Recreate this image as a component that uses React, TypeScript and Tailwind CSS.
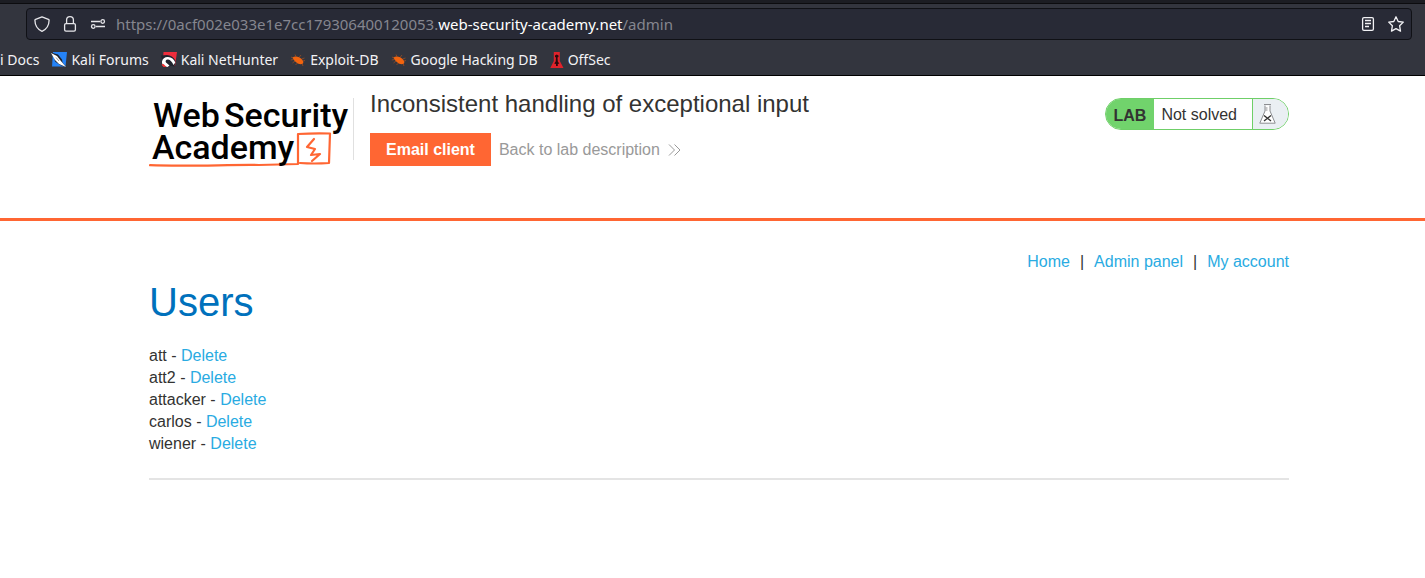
import React from "react";

const users = ["att", "att2", "attacker", "carlos", "wiener"];

function ShieldIcon() {
  return (
    <svg width="16" height="16" viewBox="0 0 16 16" fill="none" stroke="#e6e6ea" strokeWidth="1.3" strokeLinejoin="round">
      <path d="M8 .8 14.4 3.4c.5.2.7.5.7.9-.1 5-2.4 9-7.1 11C3.3 13.3 1 9.3.9 4.3c0-.4.2-.7.7-.9z" />
    </svg>
  );
}

function LockIcon() {
  return (
    <svg width="14" height="16" viewBox="0 0 14 16" fill="none" stroke="#e6e6ea" strokeWidth="1.3">
      <rect x="1.6" y="7.6" width="10.8" height="7.6" rx="1.4" />
      <path d="M3.6 7.6V4.1a3.4 3.4 0 0 1 6.8 0v3.5" />
    </svg>
  );
}

function PermissionsIcon() {
  return (
    <svg width="16" height="16" viewBox="0 0 16 16" fill="none" stroke="#e6e6ea" strokeWidth="1.3">
      <path d="M1 5.5h9M6 10.5h9" />
      <circle cx="12.7" cy="5.5" r="1.8" />
      <circle cx="3.3" cy="10.5" r="1.8" />
    </svg>
  );
}

function ReaderIcon() {
  return (
    <svg width="16" height="16" viewBox="0 0 16 16" fill="none" stroke="#f2f2f5" strokeWidth="1.3">
      <rect x="2.6" y="1.6" width="10.8" height="12.8" rx="1.4" />
      <path d="M5 4.5h6M5 7.5h6M5 10.5h4" />
    </svg>
  );
}

function StarIcon() {
  return (
    <svg width="16" height="16" viewBox="0 0 16 16" fill="none" stroke="#f2f2f5" strokeWidth="1.3" strokeLinejoin="round">
      <path d="M8 .8 10.2 5.5l5.1.6-3.7 3.6.9 5.4L8 12.6l-4.5 2.5.9-5.4L.7 6.1l5.1-.6z" />
    </svg>
  );
}

function ForumsIcon() {
  return (
    <svg width="16" height="16" viewBox="0 0 16 16">
      <path d="M2 0H16L14.5 14.5H1z" fill="#2583f7" />
      <path d="M0 .5 7 2.5l4 5 .5 3L15.5 15.5 9 13 4 9.5 3 5.5z" fill="#20242e" />
      <path d="M0 1 6 4l3.5 4.5L15 15 8 12 4 8z" fill="#fff" />
      <path d="m5 5.5 3 3.5" stroke="#20242e" strokeWidth=".5" />
    </svg>
  );
}

function NetHunterIcon() {
  return (
    <svg width="16" height="16" viewBox="0 0 16 16">
      <path d="M2.5 0H16L14 14H1.5z" fill="#ee2d3c" />
      <path d="M0 3.5 6 3c3.5.1 6.5 2 8.5 5.8l-1 5.7-3.5-.5-5.5 1L.5 12.5 1 8z" fill="#20242e" />
      <path d="M1 9.5C1.6 6.5 4 4.8 7 5c3.5.2 6 2.3 7.3 5.5L12.5 13C11 10 9.3 8 7.2 7.6 5 7.3 4 9 5 10.5l3.5 3-2 1.5C3 14.5.6 12.5 1 9.5z" fill="#fff" />
      <path d="m.5 12.5 2 2.500h3l-3-3z" fill="#e33" />
    </svg>
  );
}

function BugIcon() {
  return (
    <svg width="16" height="16" viewBox="0 0 16 16" fill="none">
      <path d="M3 6 1 5M3.5 7.5.8 8M6 4.5 5 2.5M9 5.5 11 3M11.5 7l3-1M8 10.5 5.5 13M5 9 2.5 11M13 9l2-.5M12 11.5l1 2.5" stroke="#a6501f" strokeWidth=".7" />
      <path d="M2.500 5.500C5 3.500 9.500 4.500 12 7.500c1.500 1.700 1.800 3.300.6 4.300-2 .8-4.500.2-6.500-1.500C4.500 9 3.500 7.500 2.500 5.500z" fill="#f2640f" />
    </svg>
  );
}

function OffSecIcon() {
  return (
    <svg width="14" height="16" viewBox="0 0 14 16">
      <path d="M3.8 0h6v9l3.7 7H.3L3.8 9z" fill="#e0222b" />
      <path d="M5 3.5 6.8 2.5l1.7 1V5l-1 .5.3 4 1.5 2-1.5.5V14H6v-2l-1.800-.5 1.500-2 .3-4-1-.5z" fill="#2a090d" />
    </svg>
  );
}

function AcademyLogo() {
  return (
    <svg width="203" height="78" viewBox="0 0 203 78" role="img" aria-label="Web Security Academy">
      <g fill="none" stroke="#ff6633" strokeWidth="2.2" strokeLinejoin="round" strokeLinecap="round">
        <path d="M1 67.2 C40 68.7 80 66.5 110 67 L149 66 L149 36 Q165 35 181 35.5 L180 65 Q165 66 151 65" />
        <path d="m165 41-7 8 8 2-4 6 9-1-8 7" />
      </g>
      <g className="font-['Roboto',sans-serif] font-medium" fontSize="34">
        <text x="4" y="29">Web</text>
        <text x="75" y="29">Security</text>
        <text x="3" y="61">Academy</text>
      </g>
    </svg>
  );
}

const bookmarks = [
  { name: "Kali Forums", icon: <ForumsIcon /> },
  { name: "Kali NetHunter", icon: <NetHunterIcon /> },
  { name: "Exploit-DB", icon: <BugIcon /> },
  { name: "Google Hacking DB", icon: <BugIcon /> },
  { name: "OffSec", icon: <OffSecIcon /> },
];

function BrowserChrome() {
  return (
    <div className="border-b border-black bg-[#33353e] font-['Noto_Sans',sans-serif] text-[#f2f2f5]">
      <div className="h-1 border-b border-[#0c0c0f] bg-[#1c1d23]" />
      <div className="pt-1 pr-[13px] pl-[26px]">
        <div className="flex h-8 items-center rounded border border-[#101116] bg-[#282a36] px-[7px]">
          <div className="flex items-center gap-3">
            <button aria-label="Tracking protection"><ShieldIcon /></button>
            <button aria-label="Connection secure" className="flex w-4 justify-center"><LockIcon /></button>
            <button aria-label="Permissions"><PermissionsIcon /></button>
          </div>
          <div className="ml-[10px] flex-1 text-[15px] whitespace-nowrap text-[#85868f]">
            https://0acf002e033e1e7cc179306400120053.<span className="text-white">web-security-academy.net</span>/admin
          </div>
          <div className="flex items-center gap-3">
            <button aria-label="Reader view"><ReaderIcon /></button>
            <button aria-label="Bookmark page"><StarIcon /></button>
          </div>
        </div>
      </div>
      <nav aria-label="Bookmarks" className="flex h-[35px] items-center gap-3 overflow-hidden pt-1 text-sm leading-5 whitespace-nowrap">
        <a href="#docs">i Docs</a>
        {bookmarks.map((b) => (
          <a key={b.name} href="#bookmark" className="flex items-center gap-1">
            {b.icon}
            {b.name}
          </a>
        ))}
      </nav>
    </div>
  );
}

function LabStatus() {
  return (
    <div className="flex h-8 items-stretch overflow-hidden rounded-full border border-[#6fcf68] bg-white text-base leading-[31px]">
      <span className="bg-[#71d36c] px-2 pt-px font-bold">LAB</span>
      <span className="pr-[15px] pl-[7px]">Not solved</span>
      <span className="flex w-9 items-center border-l border-[#6fcf68] bg-[#eaeff3] pl-1.5">
        <svg width="17" height="20" viewBox="0 0 17 20" fill="none">
          <path d="M6 1.5V7L.8 19.2h15.4L11 7V1.5" fill="#fff" stroke="#8b8d90" />
          <path d="M5 .5h7M6.5 4h2M6.5 6h2" stroke="#8b8d90" />
          <path d="m5 11.5 7 5.5m0-5.5-7 5.5" stroke="#333332" strokeWidth="1.4" />
        </svg>
      </span>
    </div>
  );
}

export default function App() {
  return (
    <div className="min-h-screen bg-white font-['Liberation_Sans',Arial,sans-serif] text-base text-[#333332]">
      <BrowserChrome />
      <header className="h-[145px] border-b-3 border-[#ff6633] pl-[13px]">
        <div className="mx-auto flex max-w-[1140px] items-start pt-[22px]">
          <div className="flex h-[62px] w-[205px] border-r border-[#e0e0e0]">
            <a href="#academy" className="shrink-0"><AcademyLogo /></a>
          </div>
          <div className="-mt-2 flex-1 pl-4">
            <h1 className="text-2xl leading-7">Inconsistent handling of exceptional input</h1>
            <div className="mt-[15px] flex items-center">
              <a href="#email" className="bg-[#ff6633] px-4 text-base leading-[33px] font-bold text-white">Email client</a>
              <a href="#description" className="flex items-center gap-2 pl-2 text-[#999999]">
                Back to lab description
                <svg width="13" height="12" viewBox="0 0 13 12" fill="none" stroke="#999999">
                  <path d="m1 .5 5.5 5.5L1 11.5M6.5.5 12 6l-5.5 5.5" />
                </svg>
              </a>
            </div>
          </div>
          <LabStatus />
        </div>
      </header>
      <main className="pl-[13px]">
        <div className="mx-auto max-w-[1140px] border-b-2 border-[#e4e4e4] pt-[30px] pb-[23px]">
          <nav className="flex justify-end gap-[10px] leading-[22px]">
            <a href="#home" className="text-[#29abe2]">Home</a>
            <span>|</span>
            <a href="#admin" className="text-[#29abe2]">Admin panel</a>
            <span>|</span>
            <a href="#account" className="text-[#29abe2]">My account</a>
          </nav>
          <h2 className="mt-1 mb-[18px] text-[40px] leading-[50px] text-[#0071bc]">Users</h2>
          <ul className="leading-[22px]">
            {users.map((u) => (
              <li key={u}>
                {u} - <a href="#delete" className="text-[#29abe2]">Delete</a>
              </li>
            ))}
          </ul>
        </div>
      </main>
    </div>
  );
}
